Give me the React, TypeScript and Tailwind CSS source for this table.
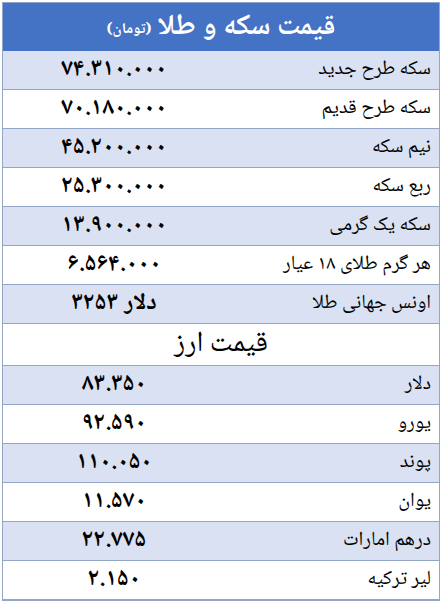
import React from "react";

/* ================= DATA ================= */

type Row = { label: string; value: string; unit?: string };

const GOLD: Row[] = [
  { label: "سکه طرح جدید", value: "۷۴.۳۱۰.۰۰۰" },
  { label: "سکه طرح قدیم", value: "۷۰.۱۸۰.۰۰۰" },
  { label: "نیم سکه", value: "۴۵.۲۰۰.۰۰۰" },
  { label: "ربع سکه", value: "۲۵.۳۰۰.۰۰۰" },
  { label: "سکه یک گرمی", value: "۱۳.۹۰۰.۰۰۰" },
  { label: "هر گرم طلای ۱۸ عیار", value: "۶.۵۶۴.۰۰۰" },
  { label: "اونس جهانی طلا", value: "۳۲۵۳", unit: "دلار" },
];

const CURRENCY: Row[] = [
  { label: "دلار", value: "۸۳.۳۵۰" },
  { label: "یورو", value: "۹۲.۵۹۰" },
  { label: "پوند", value: "۱۱۰.۰۵۰" },
  { label: "یوان", value: "۱۱.۵۷۰" },
  { label: "درهم امارات", value: "۲۲.۷۷۵" },
  { label: "لیر ترکیه", value: "۲.۱۵۰" },
];

const FONT =
  "[font-family:'Noto_Naskh_Arabic','Noto_Sans_Arabic','DejaVu_Sans',sans-serif]";

function PriceRow({ row, shaded }: { row: Row; shaded: boolean }) {
  return (
    <div
      className={`grid h-[39px] grid-cols-[214px_1fr] items-center border-b border-[#94a6c6] ${
        shaded ? "bg-[#d9e1f2]" : "bg-white"
      }`}
    >
      <div className="pr-2 text-right text-[20px] text-black">{row.label}</div>
      {/* digits on the left, unit word on the right */}
      <div
        dir="ltr"
        className="flex justify-center gap-[6px] text-[24px] font-bold text-black"
      >
        <span>{row.value}</span>
        {row.unit && <span>{row.unit}</span>}
      </div>
    </div>
  );
}

export default function App() {
  return (
    <div className="min-h-[603px] bg-white pl-[2px] pr-[2px] pt-[2px]">
      <div
        dir="rtl"
        className={`w-[438px] border border-[#94a6c6] ${FONT} leading-none`}
      >
        {/* ================= HEADER ================= */}
        <div className="flex h-[48px] items-center justify-center gap-[6px] bg-[#4472c4] text-white">
          <span className="text-[29px] font-bold">قیمت سکه و طلا</span>
          <span className="mt-[6px] text-[15px] font-bold">(تومان)</span>
        </div>

        {GOLD.map((row, i) => (
          <PriceRow key={row.label} row={row} shaded={i % 2 === 0} />
        ))}

        {/* ================= CURRENCY ================= */}
        <div className="flex h-[42px] items-center justify-center border-b border-[#94a6c6] bg-white text-[29px] text-black">
          قیمت ارز
        </div>

        {CURRENCY.map((row, i) => (
          <PriceRow key={row.label} row={row} shaded={i % 2 === 0} />
        ))}
      </div>
    </div>
  );
}
